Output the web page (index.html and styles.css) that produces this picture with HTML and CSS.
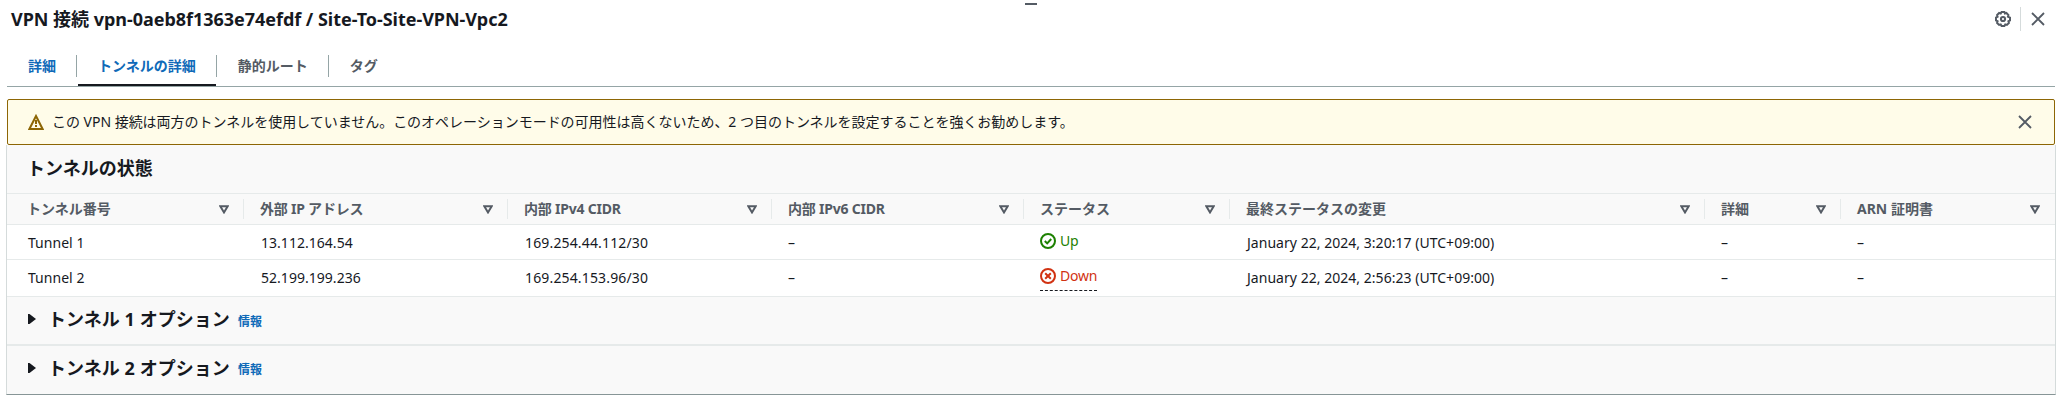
FILE: index.html
```html
<!DOCTYPE html>
<html lang="ja">
<head>
<meta charset="utf-8">
<title>VPN 接続</title>
<link rel="stylesheet" href="styles.css">
</head>
<body>
<svg width="0" height="0" class="defs">
  <symbol id="close" viewBox="0 0 14 14"><path d="M1 1l12 12M13 1L1 13" fill="none" stroke="currentColor" stroke-width="1.8"/></symbol>
  <symbol id="sort" viewBox="0 0 10 9"><path d="M1.3 1.200h7.400L5 7.400z" fill="none" stroke="currentColor" stroke-width="2"/></symbol>
  <symbol id="caret" viewBox="0 0 8 10"><path d="M0 0h1.500L8 5 1.500 10H0z" fill="currentColor"/></symbol>
</svg>
<div class="split-panel">
  <div class="handle"></div>
  <header class="header">
    <h1 class="title">VPN 接続 vpn-0aeb8f1363e74efdf / Site-To-Site-VPN-Vpc2</h1>
    <div class="actions">
      <svg class="gear" viewBox="0 0 16 16" fill="none" stroke="currentColor" stroke-width="2"><path d="M6.600 1h2.800l.5 1.500 1.500-.5 2 2-.5 1.700L15 6.600v2.800l-1.600.9.5 1.600-2 2-1.600-.5L9.400 15H6.600l-.9-1.600-1.600.5-2-2 .5-1.600L1 9.400V6.600l1.600-.9L2.100 4l2-2 1.600.5z"/><circle cx="8" cy="8" r="2.100"/></svg>
      <span class="actions-divider"></span>
      <svg class="close"><use href="#close"/></svg>
    </div>
  </header>
  <nav class="tabs">
    <a class="tab tab-link">詳細</a>
    <a class="tab tab-active">トンネルの詳細</a>
    <a class="tab">静的ルート</a>
    <a class="tab tab-last">タグ</a>
  </nav>
  <div class="alert">
    <svg class="warning" viewBox="0 0 16 16"><path d="M8 2l6.600 13H1.400z" fill="none" stroke="currentColor" stroke-width="2"/><path d="M8 6v4M8 11v2" stroke="currentColor" stroke-width="2"/></svg>
    <p class="alert-text">この VPN 接続は両方のトンネルを使用していません。このオペレーションモードの可用性は高くないため、2 つ目のトンネルを設定することを強くお勧めします。</p>
    <svg class="close"><use href="#close"/></svg>
  </div>
  <main class="container">
    <h2 class="container-title">トンネルの状態</h2>
    <div class="row row-head">
      <div class="th">トンネル番号<svg class="sort"><use href="#sort"/></svg></div>
      <div class="th th-mixed">外部 IP アドレス<svg class="sort"><use href="#sort"/></svg></div>
      <div class="th th-mixed">内部 IPv4 CIDR<svg class="sort"><use href="#sort"/></svg></div>
      <div class="th th-mixed">内部 IPv6 CIDR<svg class="sort"><use href="#sort"/></svg></div>
      <div class="th">ステータス<svg class="sort"><use href="#sort"/></svg></div>
      <div class="th">最終ステータスの変更<svg class="sort"><use href="#sort"/></svg></div>
      <div class="th">詳細<svg class="sort"><use href="#sort"/></svg></div>
      <div class="th">ARN 証明書<svg class="sort"><use href="#sort"/></svg></div>
    </div>
    <div class="row row-1">
      <div class="td">Tunnel 1</div>
      <div class="td">13.112.164.54</div>
      <div class="td td-cidr">169.254.44.112/30</div>
      <div class="td td-empty">–</div>
      <div class="td td-status"><span class="status up"><svg class="status-icon" viewBox="0 0 16 16" fill="none" stroke="currentColor" stroke-width="2"><circle cx="8" cy="8" r="7"/><path d="M4.800 8l2.400 2.400 4-4.400"/></svg>Up</span></div>
      <div class="td">January 22, 2024, 3:20:17 (UTC+09:00)</div>
      <div class="td td-empty">–</div>
      <div class="td td-empty">–</div>
    </div>
    <div class="row row-2">
      <div class="td">Tunnel 2</div>
      <div class="td">52.199.199.236</div>
      <div class="td td-cidr">169.254.153.96/30</div>
      <div class="td td-empty">–</div>
      <div class="td td-status"><span class="status down"><svg class="status-icon" viewBox="0 0 16 16" fill="none" stroke="currentColor" stroke-width="2"><circle cx="8" cy="8" r="7"/><path d="M5.200 5.200l5.600 5.600M10.800 5.200l-5.600 5.600"/></svg>Down</span></div>
      <div class="td">January 22, 2024, 2:56:23 (UTC+09:00)</div>
      <div class="td td-empty">–</div>
      <div class="td td-empty">–</div>
    </div>
    <section class="option"><svg class="caret"><use href="#caret"/></svg><h2 class="option-title">トンネル 1 オプション</h2><a class="info">情報</a></section>
    <section class="option option-second"><svg class="caret"><use href="#caret"/></svg><h2 class="option-title">トンネル 2 オプション</h2><a class="info">情報</a></section>
  </main>
</div>
</body>
</html>
```
FILE: styles.css
```css
* { box-sizing: border-box; margin: 0; padding: 0; }
body {
  width: 2066px; height: 408px; overflow: hidden;
  background: #fff; color: #16191f;
  font: 14px/22px "Noto Sans", "Noto Sans CJK JP", sans-serif;
}
.defs { display: block; }
svg { flex: none; display: block; }
.split-panel { padding-top: 3px; white-space: nowrap; }
.handle { width: 12px; height: 2px; margin-left: 1025px; background: #545b64; }
.header { display: flex; justify-content: space-between; height: 50px; padding: 0 21px 0 11px; }
.title { font-size: 18px; font-weight: 700; line-height: 28px; letter-spacing: -0.03px; }
.actions { display: flex; align-items: center; height: 28px; color: #545b64; }
.gear { width: 16px; height: 16px; margin-right: 9px; }
.actions-divider { width: 1px; height: 24px; margin-right: 10px; background: #d5dbdb; }
.close { width: 14px; height: 14px; color: #545b64; }
.tabs { display: flex; height: 32px; margin: 0 11px 12px 7px; border-bottom: 1px solid #95a5a6; font-weight: 700; line-height: 21px; color: #545b64; }
.tab { display: flex; height: 22px; padding: 0 20px 0 21px; border-right: 1px solid #95a5a6; }
.tab-link { color: #0f6ab8; }
.tab-active { position: relative; color: #0f6ab8; }
.tab-active::after { content: ""; position: absolute; left: 1px; right: 0; top: 29px; height: 2px; background: #16191f; }
.tab-last { border: 0; }
.alert { display: flex; align-items: center; height: 46px; margin: 0 11px 0 7px; padding: 0 22px 0 20px; border: 1px solid #8d6605; border-radius: 2px; background: #fffce9; }
.warning { width: 16px; height: 16px; margin-right: 8px; color: #8d6605; }
.alert-text { flex: 1; letter-spacing: -0.02px; }
.container { margin: 0 10px 0 6px; border: 1px solid #d5dbdb; border-top: 0; border-bottom-color: #879596; background: #f9f9f9; }
.container-title { height: 49px; padding: 9px 20px 0; border-bottom: 1px solid #e6eaea; font-size: 18px; line-height: 28px; }
.row { display: grid; grid-template-columns: 237px 264px 264px 252px 206px 475px 136px 214px; border-bottom: 1px solid #e6eaea; }
.row-head { height: 31px; align-items: center; }
.th { display: flex; align-items: center; justify-content: space-between; height: 20px; padding: 0 14px 0 16px; border-right: 1px solid #e6eaea; font-weight: 700; color: #545b64; }
.th-mixed { letter-spacing: -0.22px; }
.th:first-child { padding-left: 20px; }
.th:last-child { border: 0; padding-right: 15px; }
.sort { width: 10px; height: 9px; }
.row-1, .row-2 { background: #fff; }
.row-1 { height: 35px; }
.row-2 { height: 37px; }
.td { padding: 7px 0 0 17px; letter-spacing: 0.03px; }
.td:first-child { padding-left: 21px; }
.td-cidr { letter-spacing: 0.15px; }
.td-empty { padding-left: 16px; }
.td-status { padding-left: 16px; letter-spacing: -0.2px; }
.status { display: inline-flex; align-items: center; gap: 4px; height: 20px; margin-top: -1px; vertical-align: top; }
.status-icon { width: 16px; height: 16px; }
.up { color: #1d8102; }
.down { height: 25px; padding-bottom: 5px; color: #d13212; border-bottom: 1px dashed #16191f; }
.option { display: flex; align-items: center; height: 47px; padding: 0 21px 3px; }
.option-second { height: 50px; padding-bottom: 5px; border-top: 2px solid #e6eaea; }
.caret { width: 8px; height: 10px; margin-right: 12px; }
.option-title { font-size: 18px; line-height: 28px; letter-spacing: 0.05px; }
.info { margin: 5px 0 0 8px; color: #0f6ab8; font-size: 12px; font-weight: 700; }
```
